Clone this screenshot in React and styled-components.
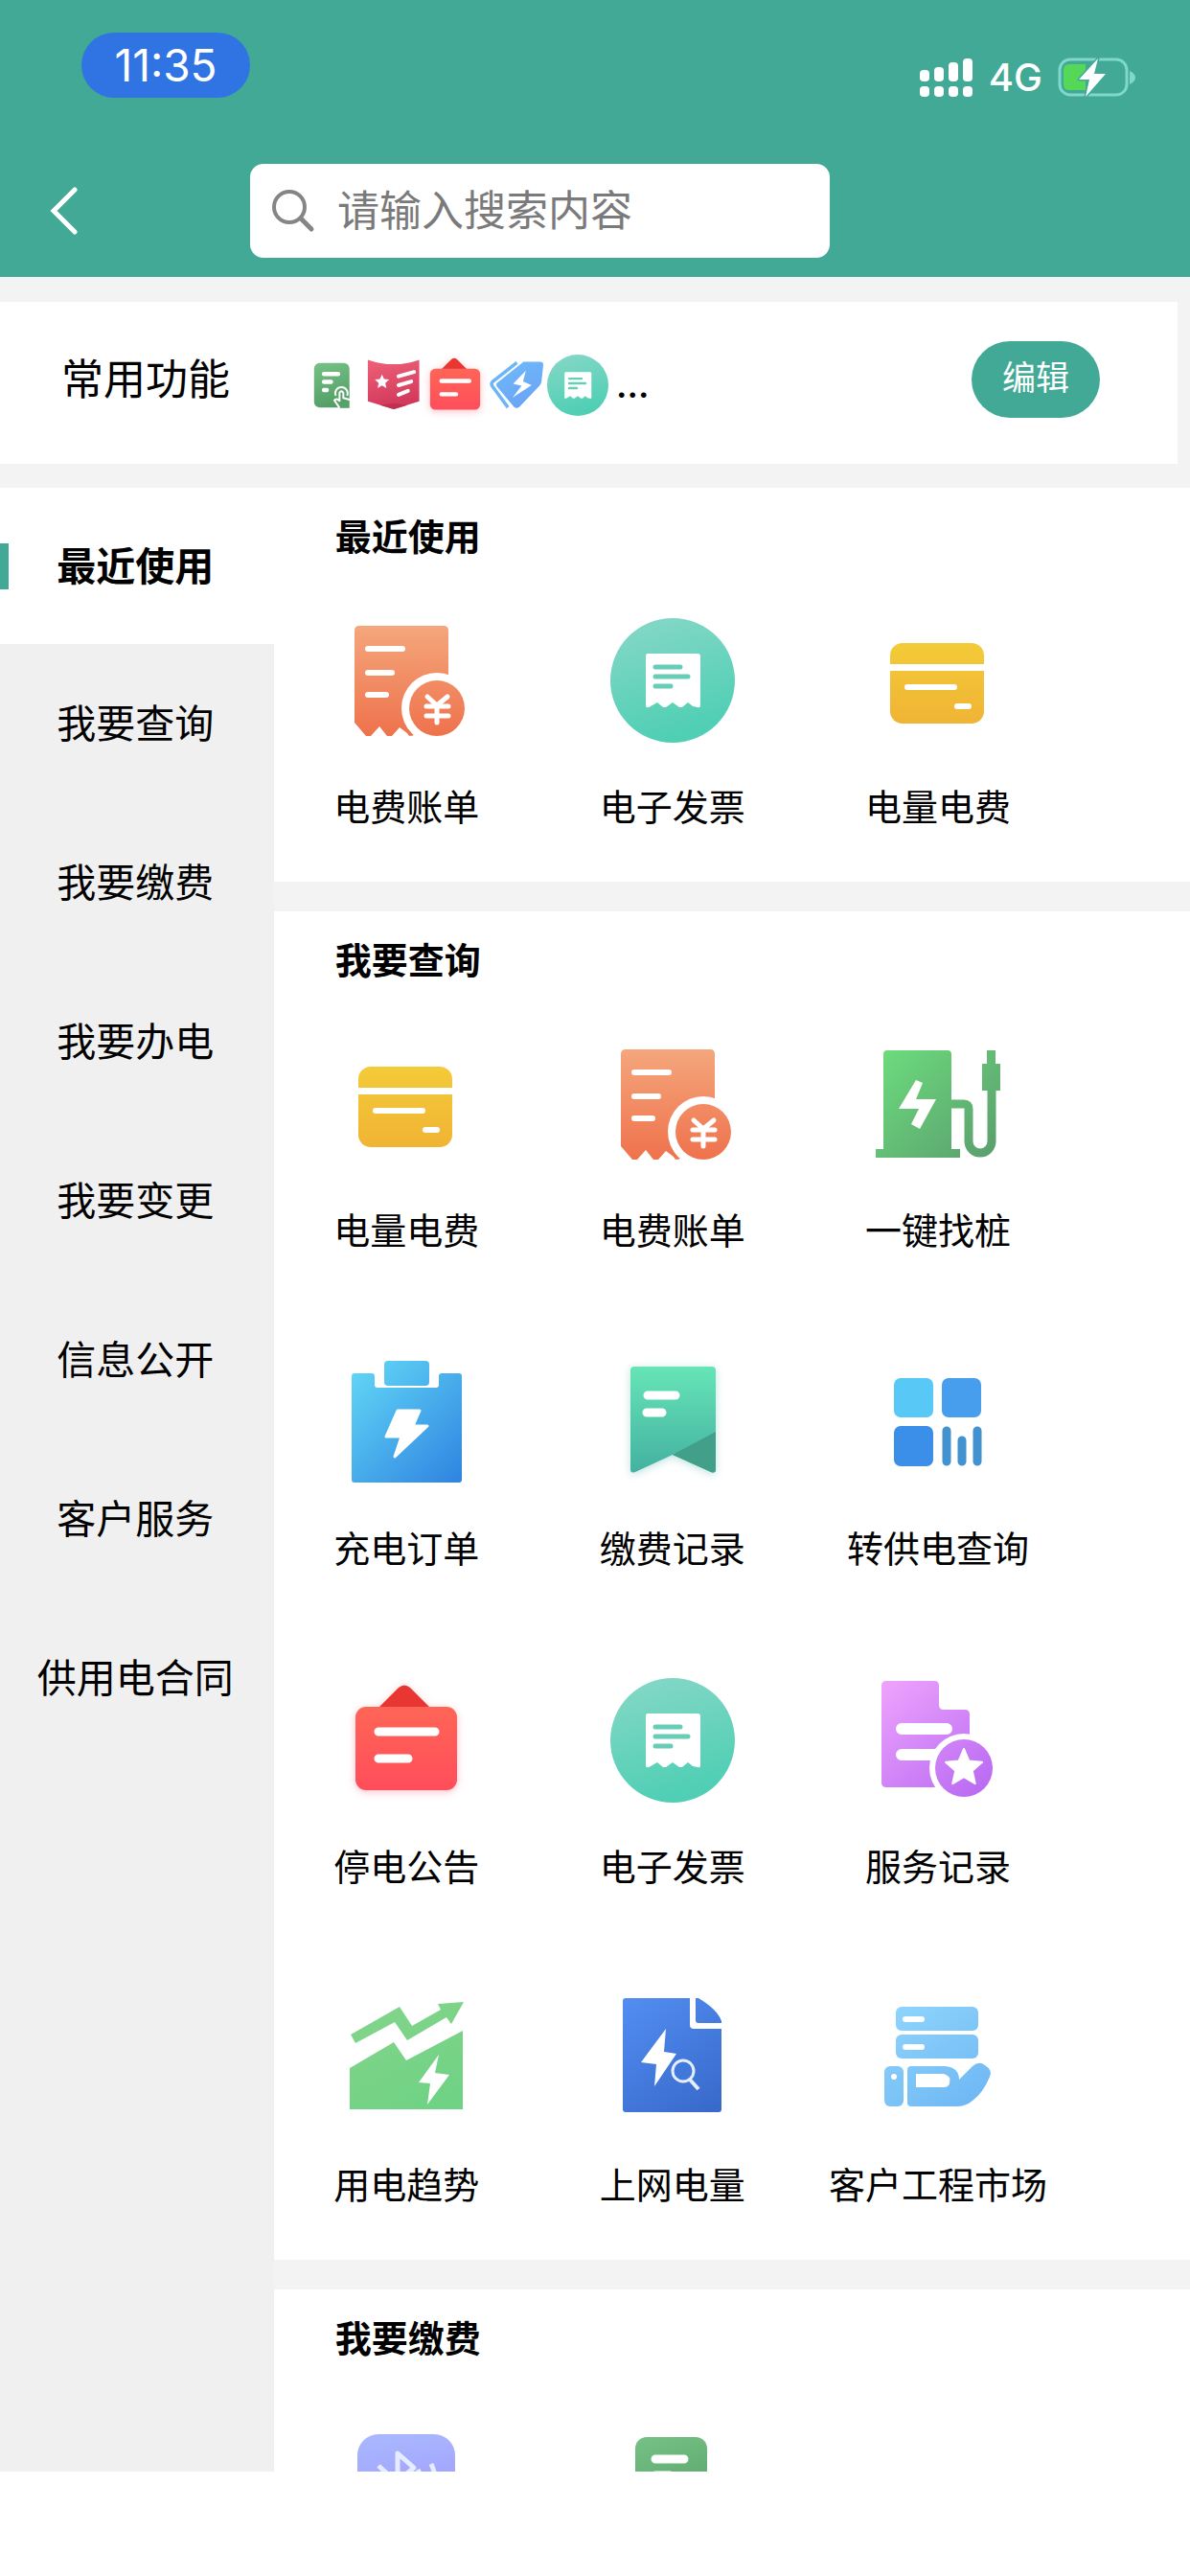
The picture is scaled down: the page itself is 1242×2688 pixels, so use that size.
import { useState } from "react";
import styled, { createGlobalStyle } from "styled-components";

const GlobalStyle = createGlobalStyle`
  * {
    box-sizing: border-box;
  }
  body {
    margin: 0;
    background: #fff;
    color: #000;
    font-family: Inter, "Noto Sans CJK SC", sans-serif;
  }
  button {
    border: none;
    padding: 0;
    background: none;
    color: inherit;
    font-family: inherit;
    cursor: pointer;
  }
`;

/* ---------- icons, all on a 130 x 130 canvas ---------- */

const gradients = [
  ["bill", "#f5aa80", "#ee6f49", 0],
  ["invoice", "#88d8c8", "#50cfb4", 40],
  ["card", "#f4d23a", "#f0ae33", 0],
  ["charger", "#6de07e", "#5a9a6c", 130],
  ["order", "#66dcf8", "#2c80e0", 130],
  ["ribbon", "#68e8b8", "#40ab9e", 0],
  ["notice", "#ff6d54", "#ff4a5c", 0],
  ["service", "#f0a6fd", "#b768f2", 110],
  ["trend", "#86d58c", "#6fd284", 60],
  ["upload", "#5590f5", "#386acb", 90],
  ["market", "#93d9fd", "#6eb6f4", 90],
  ["bluetooth", "#abc0ff", "#9d8ffb", 20],
  ["form", "#7fca8c", "#4f9a63", 40],
  ["shield", "#f2667c", "#cf3458", 30],
  ["tag", "#6fc0fb", "#6aa2f6", 60],
];

const GradientDefs = () => (
  <svg width="0" height="0" style={{ display: "block" }} aria-hidden="true">
    <defs>
      {gradients.map(([id, from, to, x2]) => (
        <linearGradient key={id} id={id} gradientUnits="userSpaceOnUse" x1="0" y1="0" x2={x2} y2="130">
          <stop offset="0" stopColor={from} />
          <stop offset="1" stopColor={to} />
        </linearGradient>
      ))}
    </defs>
  </svg>
);

const star = (cx, cy, r) =>
  Array.from({ length: 10 }, (_, i) => {
    const radius = i % 2 ? r * 0.46 : r;
    const angle = (Math.PI / 5) * i - Math.PI / 2;
    return `${cx + radius * Math.cos(angle)},${cy + radius * Math.sin(angle)}`;
  }).join(" ");

const drawings = {
  bill: (
    <>
      <path
        fill="url(#bill)"
        d="M16 8H104Q109 8 109 13V110L70 123L58 114L50 123H45L37 113L28 123H23L11 109V13Q11 8 16 8Z"
      />
      <path stroke="#fff" strokeWidth="6" strokeLinecap="round" d="M25 32H61M25 57H50M25 80H44" />
      <circle cx="97" cy="94" r="37" fill="#fff" />
      <path fill="#ef7850" d="M62 114Q65 119 71 122L68 123Z" />
      <circle cx="97" cy="94" r="29" fill="url(#bill)" />
      <path
        stroke="#fff"
        strokeWidth="5"
        strokeLinecap="round"
        strokeLinejoin="round"
        fill="none"
        d="M87 82L97 91L108 82M86 92H109M86 102H109M97 91V109"
      />
    </>
  ),
  invoice: (
    <>
      <circle cx="65" cy="65" r="65" fill="url(#invoice)" />
      <path
        fill="#fff"
        d="M39 37H91Q94 37 94 40V91Q94 94 91 93L86 92L81 88L75 93H72L65 88L58 93H55L49 88L42 92Q37 95 37 91V40Q37 37 39 37Z"
      />
      <path stroke="#68cdb7" strokeWidth="5" strokeLinecap="round" d="M47 51H73M47 61H81M47 71H63" />
    </>
  ),
  card: (
    <>
      <rect x="15" y="26" width="98" height="84" rx="13" fill="url(#card)" />
      <rect x="14" y="48" width="100" height="7" fill="#fff" />
      <path stroke="#fff" strokeWidth="6" strokeLinecap="round" d="M33 72H82M85 92H97" />
    </>
  ),
  charger: (
    <>
      <path fill="url(#charger)" d="M0 121V112H8V13Q8 9 12 9H75Q79 9 79 13V112H88V121Z" />
      <path
        fill="none"
        stroke="url(#charger)"
        strokeWidth="9"
        d="M79 65H92Q97 65 97 70V104A12 12 0 0 0 121 104V50"
      />
      <path fill="url(#charger)" d="M116 9H125V23H130V51H111V23H116Z" />
      <path fill="#fff" d="M42 40L49 43L42 60H63L46 91L37 86L45 70H24Z" />
    </>
  ),
  order: (
    <>
      <path
        fill="url(#order)"
        d="M11 14H29Q32 14 32 17V26Q32 29 35 29H96Q99 29 99 26V17Q99 14 102 14H120Q123 14 123 17V125Q123 128 120 128H11Q8 128 8 125V17Q8 14 11 14Z"
      />
      <rect x="42" y="1" width="47" height="26" rx="4" fill="url(#order)" />
      <path
        fill="#fff"
        stroke="#fff"
        strokeWidth="3"
        strokeLinejoin="round"
        d="M56 53H79L72 69H87L53 101L60 80H44Z"
      />
    </>
  ),
  ribbon: (
    <>
      <path fill="url(#ribbon)" d="M25 7H106Q110 7 110 11V114Q110 119 105 117L65 99L26 117Q21 119 21 114V11Q21 7 25 7Z" />
      <path fill="#419f8a" d="M110 75V114Q110 119 105 117L65 99Z" />
      <path stroke="#fff" strokeWidth="9" strokeLinecap="round" d="M39 37H68M38 55H54" />
    </>
  ),
  transfer: (
    <>
      <rect x="19" y="19" width="41" height="41" rx="7" fill="#58c8f6" />
      <rect x="69" y="19" width="41" height="41" rx="7" fill="#469eec" />
      <rect x="19" y="69" width="41" height="42" rx="7" fill="#3b8fe8" />
      <path stroke="#4292d0" strokeWidth="9" strokeLinecap="round" d="M74 74V106M90 84V106M106 74V106" />
    </>
  ),
  notice: (
    <>
      <path fill="#e83733" d="M35 32L57 10Q63 5 69 10L91 32Z" />
      <rect x="12" y="30" width="106" height="87" rx="11" fill="url(#notice)" />
      <path stroke="#fff" strokeWidth="9" strokeLinecap="round" d="M36 56H95M36 84H67" />
    </>
  ),
  service: (
    <>
      <path
        fill="url(#service)"
        d="M11 3H61Q66 3 66 8V28Q66 33 71 33H93Q98 33 98 38V114H11Q6 114 6 109V8Q6 3 11 3Z"
      />
      <path stroke="#fff" strokeWidth="12" strokeLinecap="round" d="M27 53H74M27 80H65" />
      <circle cx="92" cy="94" r="36" fill="#fff" />
      <circle cx="92" cy="94" r="30" fill="url(#service)" />
      <polygon points={star(92, 94, 20)} fill="#fff" stroke="#fff" strokeWidth="2" strokeLinejoin="round" />
    </>
  ),
  trend: (
    <>
      <path
        fill="url(#trend)"
        d="M7 40L58 11L71 31L101 14L98 8L125 6L112 29L107 22L66 46L53 27L12 49Z"
      />
      <path fill="url(#trend)" d="M6 75L52 48L65 67L124 36V118H6Z" />
      <path fill="#fff" d="M99 61L95 80L110 82L87 113L90 91L78 90Z" />
    </>
  ),
  upload: (
    <>
      <path fill="url(#upload)" d="M16 2H83V30Q83 34 87 34H116V118Q116 121 113 121H16Q13 121 13 118V5Q13 2 16 2Z" />
      <path fill="url(#upload)" d="M89 2H92Q112 14 116 26V28H92Q89 28 89 25Z" />
      <path fill="#fff" d="M58 34L56 58L69 60L46 94L48 71L32 69Z" />
      <circle cx="76" cy="78" r="11" fill="#4178dc" stroke="#e4eeff" strokeWidth="3" />
      <path stroke="#e4eeff" strokeWidth="4" d="M83 87L92 97" />
    </>
  ),
  market: (
    <>
      <rect x="21" y="11" width="86" height="25" rx="6" fill="url(#market)" />
      <rect x="21" y="40" width="86" height="25" rx="6" fill="url(#market)" />
      <path stroke="#fff" strokeWidth="6" strokeLinecap="round" d="M31 24H48M31 53H48" />
      <rect x="9" y="73" width="20" height="42" rx="6" fill="url(#market)" />
      <circle cx="19" cy="84" r="3" fill="#fff" />
      <path
        fill="url(#market)"
        d="M37 73H72Q87 74 87 87L101 73Q108 67 114 72Q122 77 119 84Q112 101 101 109Q94 115 84 115H37Q33 115 33 111V77Q33 73 37 73Z"
      />
      <path fill="#fff" d="M42 81H71Q79 83 77 91Q76 95 71 95H42Z" />
    </>
  ),
  bluetooth: (
    <>
      <rect x="14" y="15" width="102" height="102" rx="22" fill="url(#bluetooth)" />
      <path
        fill="none"
        stroke="#e6ecff"
        strokeWidth="5"
        strokeLinejoin="round"
        d="M36 48L74 82L56 98V35L73 50L36 82M77 52Q84 65 77 80M91 46Q100 65 91 86"
      />
    </>
  ),
  form: (
    <>
      <rect x="26" y="18" width="75" height="94" rx="12" fill="url(#form)" />
      <path stroke="#fff" strokeWidth="9" strokeLinecap="round" d="M47 41H77M47 58H62M47 75H53" />
      <path
        fill="#56a069"
        stroke="#fff"
        strokeWidth="4"
        strokeLinejoin="round"
        d="M80 113L69 97Q73 91 80 98V81Q84 74 88 81V92L103 96V113"
      />
      <path fill="none" stroke="#fff" strokeWidth="4" d="M72 87A13 13 0 1 1 96 87" />
    </>
  ),
  shield: (
    <>
      <path fill="url(#shield)" d="M10 11Q65 30 119 11V99L65 116L10 99Z" />
      <path fill="#c2304f" d="M36 107L65 103L94 107L65 116Z" />
      <polygon points={star(40, 58, 16)} fill="#fff" />
      <path stroke="#fff" strokeWidth="8" strokeLinecap="round" d="M75 46L108 37M75 65L102 57M75 85L95 77" />
    </>
  ),
  tag: (
    <>
      <path
        fill="url(#tag)"
        d="M80 15H115Q122 15 122 22L118 58Q117 63 113 67L72 110Q66 116 60 111L23 67Q21 63 24 60Z"
      />
      <path fill="none" stroke="#6cb6f8" strokeWidth="7" d="M66 17L15 57Q10 62 14 67L47 112" />
      <path fill="#fff" d="M85 34L58 62L76 66L57 91L97 65L79 57Z" />
    </>
  ),
};

const Drawing = styled.svg`
  display: block;
  flex: none;
  width: ${({ $size }) => $size}px;
  height: ${({ $size }) => $size}px;
  filter: ${({ $glow }) => ($glow ? `drop-shadow(0 2px 4px ${$glow})` : "none")};
`;

const glows = { notice: "#ff4a5c55", ribbon: "#40ab9e55" };

const Icon = ({ name, size = 130 }) => (
  <Drawing viewBox="0 0 130 130" $size={size} $glow={glows[name]} aria-hidden="true">
    {drawings[name]}
  </Drawing>
);

/* ---------- header ---------- */

const Header = styled.header`
  flex: none;
  padding: 34px 0 20px;
  background: #42a996;
  color: #fff;
`;

const StatusBar = styled.div`
  display: flex;
  justify-content: space-between;
  align-items: flex-end;
  padding: 0 56px 0 85px;
`;

const Clock = styled.time`
  width: 176px;
  border-radius: 34px;
  background: #3073e3;
  font-size: 46px;
  line-height: 68px;
  text-align: center;
`;

const Signals = styled.div`
  display: flex;
  align-items: center;
  gap: 16px;
  font-size: 40px;
  font-weight: 500;
  line-height: 42px;
`;

const SearchRow = styled.div`
  display: flex;
  align-items: center;
  margin-top: 69px;
`;

const BackButton = styled.button`
  flex: none;
  width: 261px;
  height: 98px;
  padding-left: 52px;
`;

const SearchBox = styled.label`
  display: flex;
  flex: 1;
  align-items: center;
  gap: 23px;
  min-width: 0;
  height: 98px;
  margin-right: 376px;
  padding: 0 22px;
  border-radius: 14px;
  background: #fff;
`;

const SearchInput = styled.input`
  flex: 1;
  min-width: 0;
  border: none;
  padding: 0;
  outline: none;
  background: none;
  font-family: inherit;
  font-size: 44px;
  line-height: 60px;

  &::placeholder {
    color: #7a7a7a;
    opacity: 1;
  }
`;

const signalBars = [12, 15, 20, 24];

const TopBar = () => (
  <Header>
    <StatusBar>
      <Clock>11:35</Clock>
      <Signals>
        <svg width="56" height="42" viewBox="0 0 56 42" aria-hidden="true" fill="#fff">
          {signalBars.map((height, index) => (
            <g key={height}>
              <rect x={index * 15} y={25 - height} width="10" height={height} rx="4" />
              <rect x={index * 15} y="30" width="10" height="11" rx="4" />
            </g>
          ))}
        </svg>
        <span>4G</span>
        <svg width="82" height="42" viewBox="0 0 82 42" aria-hidden="true">
          <rect x="2" y="2" width="70" height="37" rx="11" fill="none" stroke="#7fd8ca" strokeWidth="3" />
          <path fill="#7fd8ca" d="M75 14Q81 17 81 21Q81 25 75 28Z" />
          <path fill="#55d858" d="M12 7H29V34H12Q6 34 6 28V13Q6 7 12 7Z" />
          <path
            fill="#fff"
            stroke="#42a996"
            strokeWidth="3"
            strokeLinejoin="round"
            paintOrder="stroke"
            d="M42 1L22 23H33L29 41L50 17H38Z"
          />
        </svg>
      </Signals>
    </StatusBar>
    <SearchRow>
      <BackButton aria-label="返回">
        <svg width="30" height="50" viewBox="0 0 30 50" style={{ display: "block" }}>
          <path d="M26 3L4 25L26 47" fill="none" stroke="#fff" strokeWidth="5" strokeLinecap="round" />
        </svg>
      </BackButton>
      <SearchBox>
        <svg width="46" height="46" viewBox="0 0 46 46" aria-hidden="true">
          <circle cx="19" cy="19" r="16" fill="none" stroke="#858585" strokeWidth="4" />
          <path d="M31 31L42 42" stroke="#858585" strokeWidth="5" strokeLinecap="round" />
        </svg>
        <SearchInput type="search" placeholder="请输入搜索内容" aria-label="搜索" />
      </SearchBox>
    </SearchRow>
  </Header>
);

/* ---------- favourites ---------- */

const Favourites = styled.section`
  display: flex;
  flex: none;
  align-items: center;
  height: 169px;
  margin: 26px 13px 25px 0;
  padding: 0 81px 8px 64px;
  background: #fff;
`;

const FavouritesTitle = styled.h2`
  margin: 0 75px 0 0;
  font-size: 44px;
  font-weight: 400;
  line-height: 60px;
`;

const FavouriteIcons = styled.div`
  display: flex;
  align-items: center;
  margin: 12px auto 0 0;
`;

const More = styled.span`
  padding-left: 8px;
  font-size: 36px;
  font-weight: 600;
  line-height: 50px;
`;

const EditButton = styled.button`
  width: 134px;
  height: 80px;
  border-radius: 40px;
  background: #42a996;
  color: #fff;
  font-size: 35px;
  line-height: 76px;
  padding-bottom: 4px;
`;

/* ---------- body ---------- */

const Page = styled.div`
  display: flex;
  flex-direction: column;
  height: 100vh;
  padding-bottom: 109px;
  background: #fff;
`;

const Top = styled.div`
  flex: none;
  background: #f3f3f3;
  overflow: hidden;
`;

const Body = styled.main`
  display: flex;
  flex: 1;
  min-height: 0;
`;

const Sidebar = styled.nav`
  display: flex;
  flex: none;
  flex-direction: column;
  width: 23%;
  background: #f0f0f0;
`;

const SidebarItem = styled.button`
  display: flex;
  align-items: center;
  height: 166px;
  background: ${({ $active }) => ($active ? "#fff" : "transparent")};
  font-size: 41px;
  font-weight: ${({ $active }) => ($active ? 700 : 400)};
  line-height: 60px;

  &:first-child {
    height: 163px;
  }

  &::before {
    content: "";
    width: 9px;
    height: 48px;
    background: ${({ $active }) => ($active ? "#42a996" : "transparent")};
  }

  & span {
    flex: 1;
    padding-right: 12px;
  }
`;

const Content = styled.div`
  display: flex;
  flex: 1;
  flex-direction: column;
  gap: 31px;
  background: #f3f3f3;
  overflow-y: auto;
  scrollbar-width: none;
`;

const Group = styled.section`
  flex: none;
  padding-bottom: 53px;
  background: #fff;
`;

const GroupTitle = styled.h3`
  margin: 0;
  padding-left: 64px;
  font-size: 38px;
  font-weight: 700;
  line-height: 102px;
`;

const Tiles = styled.div`
  display: grid;
  grid-template-columns: repeat(3, 29%);
  row-gap: 110px;
  padding-top: 34px;
`;

const Tile = styled.button`
  display: flex;
  flex-direction: column;
  align-items: center;
  gap: 42px;
  min-height: 222px;
  font-size: 38px;
  line-height: 50px;
  white-space: nowrap;
`;

const favourites = ["form", "shield", "notice", "tag", "invoice"];

const menu = [
  "最近使用",
  "我要查询",
  "我要缴费",
  "我要办电",
  "我要变更",
  "信息公开",
  "客户服务",
  "供用电合同",
];

const groups = [
  {
    title: "最近使用",
    tiles: [
      { icon: "bill", label: "电费账单" },
      { icon: "invoice", label: "电子发票" },
      { icon: "card", label: "电量电费" },
    ],
  },
  {
    title: "我要查询",
    tiles: [
      { icon: "card", label: "电量电费" },
      { icon: "bill", label: "电费账单" },
      { icon: "charger", label: "一键找桩" },
      { icon: "order", label: "充电订单" },
      { icon: "ribbon", label: "缴费记录" },
      { icon: "transfer", label: "转供电查询" },
      { icon: "notice", label: "停电公告" },
      { icon: "invoice", label: "电子发票" },
      { icon: "service", label: "服务记录" },
      { icon: "trend", label: "用电趋势" },
      { icon: "upload", label: "上网电量" },
      { icon: "market", label: "客户工程市场" },
    ],
  },
  {
    title: "我要缴费",
    tiles: [{ icon: "bluetooth" }, { icon: "form" }],
  },
];

export default function App() {
  const [active, setActive] = useState(0);

  return (
    <Page>
      <GlobalStyle />
      <GradientDefs />
      <Top>
        <TopBar />
        <Favourites>
          <FavouritesTitle>常用功能</FavouritesTitle>
          <FavouriteIcons>
            {favourites.map((name) => (
              <Icon key={name} name={name} size={64} />
            ))}
            <More>...</More>
          </FavouriteIcons>
          <EditButton>编辑</EditButton>
        </Favourites>
      </Top>
      <Body>
        <Sidebar>
          {menu.map((item, index) => (
            <SidebarItem key={item} $active={index === active} onClick={() => setActive(index)}>
              <span>{item}</span>
            </SidebarItem>
          ))}
        </Sidebar>
        <Content>
          {groups.map(({ title, tiles }) => (
            <Group key={title}>
              <GroupTitle>{title}</GroupTitle>
              <Tiles>
                {tiles.map(({ icon, label }) => (
                  <Tile key={icon}>
                    <Icon name={icon} />
                    {label}
                  </Tile>
                ))}
              </Tiles>
            </Group>
          ))}
        </Content>
      </Body>
    </Page>
  );
}
